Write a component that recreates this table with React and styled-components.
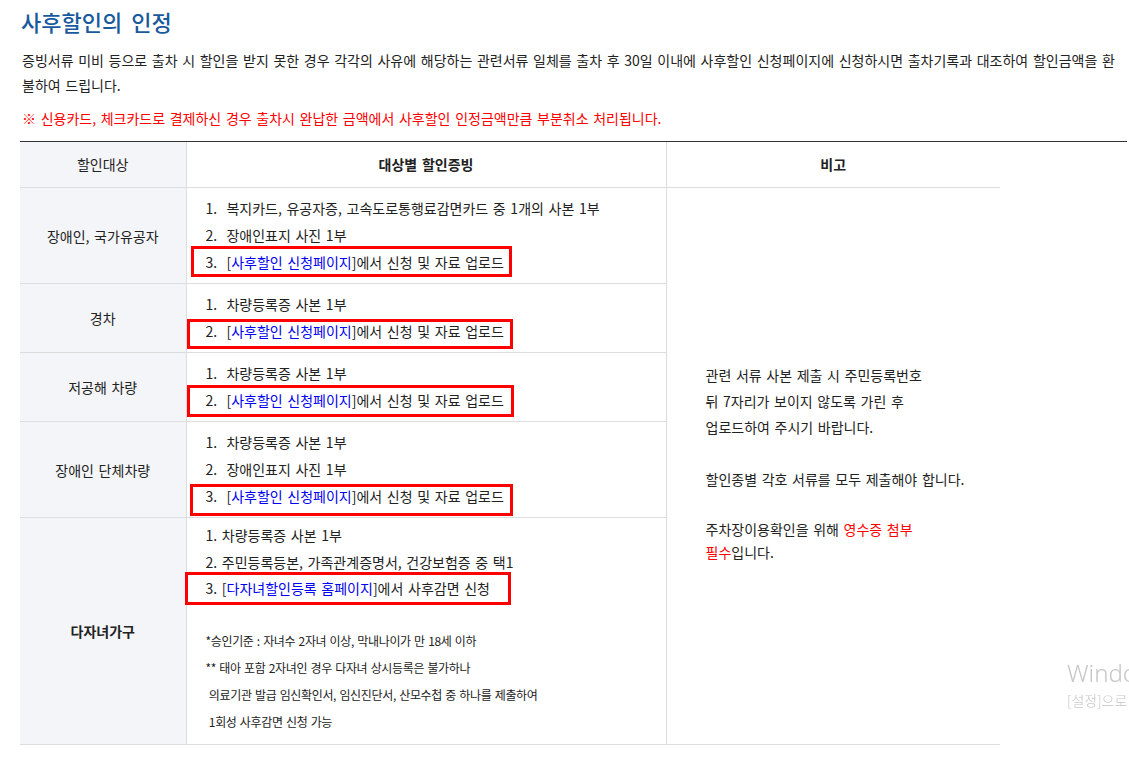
import styled, { createGlobalStyle } from 'styled-components';

const GlobalStyle = createGlobalStyle`
  html, body {
    margin: 0;
    padding: 0;
    overflow: hidden;
    background: #fff;
  }
  body {
    font-family: "Noto Sans CJK KR", "Noto Sans", sans-serif;
    font-size: 14px;
    color: #222;
    letter-spacing: 0;
    word-spacing: 1.5px;
  }
`;

const Page = styled.div`
  width: 1107px;
  padding-left: 20px;
`;

const Title = styled.h2`
  margin: 6px 0 12px 1px;
  font-size: 22px;
  line-height: 30px;
  font-weight: 500;
  color: #185a9d;
  letter-spacing: 0;
  word-spacing: 4px;
`;

const Intro = styled.p`
  margin: 0 0 0 2px;
  width: 1095px;
  line-height: 25px;
  word-break: break-all;
`;

const Notice = styled.p`
  margin: 8px 0 0 2px;
  line-height: 25px;
  color: #f00;
`;

const TableWrap = styled.div`
  margin-top: 10px;
  border-top: 1px solid #333;
`;

const Table = styled.table`
  width: 980px;
  border-collapse: collapse;
  table-layout: fixed;
`;

const Col = styled.col`
  width: ${p => p.$w}px;
`;

const HeadCell = styled.th`
  padding: 9px 0;
  line-height: 27px;
  font-weight: ${p => (p.$bold ? 700 : 400)};
  background: ${p => (p.$shade ? '#f4f5f9' : '#fff')};
  border-bottom: 1px solid #ddd;
  border-left: 1px solid #ddd;
  &:first-child {
    border-left: none;
  }
`;

const TargetCell = styled.td`
  text-align: center;
  vertical-align: middle;
  background: #f4f5f9;
  border-bottom: 1px solid #ddd;
  font-weight: ${p => (p.$bold ? 700 : 400)};
`;

const ProofCell = styled.td`
  padding: ${p => p.$pad || '7px 20px 7px 19px'};
  vertical-align: middle;
  border-left: 1px solid #ddd;
  border-bottom: 1px solid #ddd;
`;

const NoteCell = styled.td`
  padding: 0 20px 5px 39px;
  vertical-align: middle;
  border-left: 1px solid #ddd;
  border-bottom: 1px solid #ddd;
`;

const ProofList = styled.ol`
  list-style: none;
  margin: 0;
  padding: 0;
  line-height: ${p => p.$lh || 27}px;
`;

const ProofItem = styled.li`
  position: relative;
  white-space: pre;

  ${p =>
    p.$box &&
    `
    &::after {
      content: '';
      position: absolute;
      left: ${p.$box[0]}px;
      top: ${p.$box[1]}px;
      width: ${p.$box[2]}px;
      height: ${p.$box[3]}px;
      border: 3px solid #f00;
      box-sizing: border-box;
      pointer-events: none;
    }
  `}
`;

const Link = styled.span`
  color: #0000f0;
`;

const Red = styled.span`
  color: #f00;
`;

const SmallNotes = styled.ul`
  list-style: none;
  margin: 25px 0 2px;
  padding: 0;
  font-size: 12px;
  line-height: 27px;
  letter-spacing: -0.35px;
  word-spacing: 1px;
  white-space: pre;
`;

const NoteText = styled.div`
  line-height: 26px;
`;

const NoteP = styled.p`
  margin: 0 0 ${p => (p.$last ? 0 : 26)}px;
  line-height: ${p => p.$lh || 26}px;
`;

const Watermark = styled.div`
  position: fixed;
  left: 1067px;
  top: 656px;
  white-space: nowrap;
  color: #c6c6c6;
  font-family: "Noto Sans", "Noto Sans CJK KR", sans-serif;
  font-weight: 300;
  letter-spacing: 0;
  word-spacing: 0;
  pointer-events: none;
`;

const WatermarkTitle = styled.div`
  font-size: 24px;
  line-height: 34px;
`;

const WatermarkSub = styled.div`
  font-family: "Noto Sans CJK KR", sans-serif;
  font-size: 14px;
  line-height: 20px;
`;

const Apply = ({ label }) => (
  <>
    [<Link>{label}</Link>]
  </>
);

const groups = [
  {
    target: '장애인, 국가유공자',
    items: [
      { text: '1.  복지카드, 유공자증, 고속도로통행료감면카드 중 1개의 사본 1부' },
      { text: '2.  장애인표지 사진 1부' },
      { n: '3.  ', box: [-15, -3, 321, 31] },
    ],
  },
  {
    target: '경차',
    items: [
      { text: '1.  차량등록증 사본 1부' },
      { n: '2.  ', box: [-19, 1, 326, 30] },
    ],
  },
  {
    target: '저공해 차량',
    items: [
      { text: '1.  차량등록증 사본 1부' },
      { n: '2.  ', box: [-19, -2, 327, 32] },
    ],
  },
  {
    target: '장애인 단체차량',
    items: [
      { text: '1.  차량등록증 사본 1부' },
      { text: '2.  장애인표지 사진 1부' },
      { n: '3.  ', box: [-16, 1, 323, 32] },
    ],
  },
];

export default function App() {
  return (
    <>
      <GlobalStyle />
      <Page>
        <Title>사후할인의 인정</Title>
        <Intro>
          증빙서류 미비 등으로 출차 시 할인을 받지 못한 경우 각각의 사유에 해당하는 관련서류 일체를 출차 후 30일 이내에 사후할인 신청페이지에 신청하시면 출차기록과 대조하여 할인금액을 환불하여 드립니다.
        </Intro>
        <Notice>※ 신용카드, 체크카드로 결제하신 경우 출차시 완납한 금액에서 사후할인 인정금액만큼 부분취소 처리됩니다.</Notice>

        <TableWrap>
          <Table>
            <colgroup>
              <Col $w={166} />
              <Col $w={480} />
              <Col $w={334} />
            </colgroup>
            <thead>
              <tr>
                <HeadCell $shade>할인대상</HeadCell>
                <HeadCell $bold>대상별 할인증빙</HeadCell>
                <HeadCell $bold>비고</HeadCell>
              </tr>
            </thead>
            <tbody>
              {groups.map((g, gi) => (
                <tr key={g.target}>
                  <TargetCell>{g.target}</TargetCell>
                  <ProofCell>
                    <ProofList>
                      {g.items.map((it, i) => (
                        <ProofItem key={i} $box={it.box}>
                          {it.text ? (
                            it.text
                          ) : (
                            <>
                              {it.n}
                              <Apply label="사후할인 신청페이지" />
                              에서 신청 및 자료 업로드
                            </>
                          )}
                        </ProofItem>
                      ))}
                    </ProofList>
                  </ProofCell>
                  {gi === 0 && (
                    <NoteCell rowSpan={5}>
                      <NoteText>
                        <NoteP>
                          관련 서류 사본 제출 시 주민등록번호
                          <br />
                          뒤 7자리가 보이지 않도록 가린 후
                          <br />
                          업로드하여 주시기 바랍니다.
                        </NoteP>
                        <NoteP>할인종별 각호 서류를 모두 제출해야 합니다.</NoteP>
                        <NoteP $last $lh={23}>
                          주차장이용확인을 위해 <Red>영수증 첨부</Red>
                          <br />
                          <Red>필수</Red>입니다.
                        </NoteP>
                      </NoteText>
                    </NoteCell>
                  )}
                </tr>
              ))}
              <tr>
                <TargetCell $bold>다자녀가구</TargetCell>
                <ProofCell $pad="4px 20px 7px 19px">
                  <ProofList $lh={26.5}>
                    <ProofItem>1. 차량등록증 사본 1부</ProofItem>
                    <ProofItem>2. 주민등록등본, 가족관계증명서, 건강보험증 중 택1</ProofItem>
                    <ProofItem $box={[-21, -3, 326, 33]}>
                      3. <Apply label="다자녀할인등록 홈페이지" />
                      에서 사후감면 신청
                    </ProofItem>
                  </ProofList>
                  <SmallNotes>
                    <li>*승인기준 : 자녀수 2자녀 이상, 막내나이가 만 18세 이하</li>
                    <li>** 태아 포함 2자녀인 경우 다자녀 상시등록은 불가하나</li>
                    <li> 의료기관 발급 임신확인서, 임신진단서, 산모수첩 중 하나를 제출하여</li>
                    <li> 1회성 사후감면 신청 가능</li>
                  </SmallNotes>
                </ProofCell>
              </tr>
            </tbody>
          </Table>
        </TableWrap>
      </Page>

      <Watermark>
        <WatermarkTitle>Windows 정품 인증</WatermarkTitle>
        <WatermarkSub>[설정]으로 이동하여 Windows를 정품 인증합니다.</WatermarkSub>
      </Watermark>
    </>
  );
}
